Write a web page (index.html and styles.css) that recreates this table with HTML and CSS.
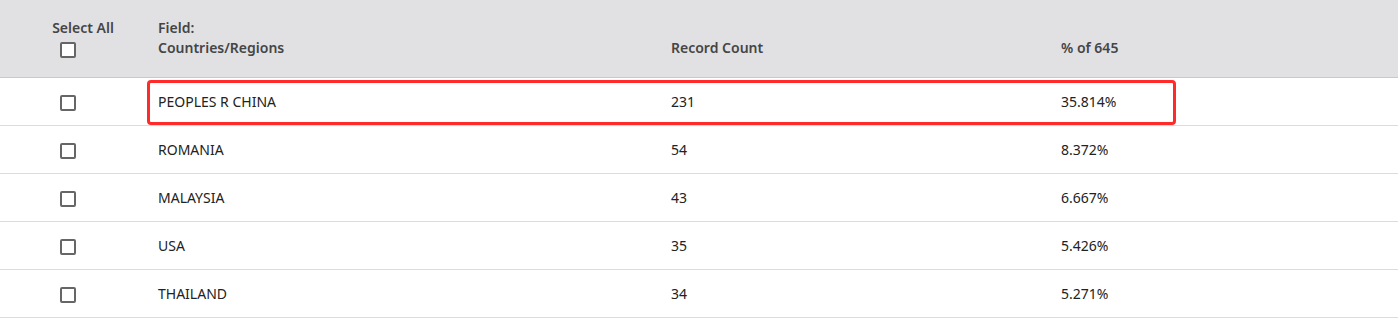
FILE: index.html
```html
<!DOCTYPE html>
<html>
<head>
<meta charset="utf-8">
<link rel="stylesheet" href="styles.css">
</head>
<body>
<div class="table">
  <div class="row head">
    <div class="cell sel">
      <span class="sel-label">Select All</span>
      <span class="box"></span>
    </div>
    <div class="cell">Field:<br>Countries/Regions</div>
    <div class="cell bottom">Record Count</div>
    <div class="cell bottom">% of 645</div>
  </div>
  <div class="row body highlight">
    <div class="cell chk"><span class="box"></span></div>
    <div class="cell">PEOPLES R CHINA</div>
    <div class="cell">231</div>
    <div class="cell">35.814%</div>
    <div class="mark"></div>
  </div>
  <div class="row body">
    <div class="cell chk"><span class="box"></span></div>
    <div class="cell">ROMANIA</div>
    <div class="cell">54</div>
    <div class="cell">8.372%</div>
  </div>
  <div class="row body">
    <div class="cell chk"><span class="box"></span></div>
    <div class="cell">MALAYSIA</div>
    <div class="cell">43</div>
    <div class="cell">6.667%</div>
  </div>
  <div class="row body">
    <div class="cell chk"><span class="box"></span></div>
    <div class="cell">USA</div>
    <div class="cell">35</div>
    <div class="cell">5.426%</div>
  </div>
  <div class="row body">
    <div class="cell chk"><span class="box"></span></div>
    <div class="cell">THAILAND</div>
    <div class="cell">34</div>
    <div class="cell">5.271%</div>
  </div>
</div>
</body>
</html>
```
FILE: styles.css
```css
html, body {
  margin: 0;
  padding: 0;
  background: #ffffff;
}
body {
  font-family: "Noto Sans", "Liberation Sans", sans-serif;
  font-size: 14px;
  color: #222222;
}
.table {
  width: 1398px;
}
.row {
  display: grid;
  grid-template-columns: 136px 513px 390px 359px;
  position: relative;
}
.head {
  background: #e1e1e4;
  border-bottom: 1px solid #c9c9cc;
  height: 77px;
  box-sizing: border-box;
  height: 78px;
  color: #454545;
  font-weight: 600;
}
.head .cell {
  padding: 18px 0 0 22px;
  line-height: 20px;
}
.head .cell.bottom {
  padding-top: 38px;
}
.head .cell.sel {
  padding: 18px 0 0 0;
  display: flex;
  flex-direction: column;
  align-items: center;
}
.sel-label {
  margin-left: 30px;
}
.head .box {
  margin-top: 4px;
}
.body {
  height: 48px;
  box-sizing: border-box;
  border-bottom: 1px solid #dcdcdc;
  align-items: center;
}
.body .cell {
  padding-left: 22px;
  line-height: 20px;
}
.body .cell.chk {
  padding-left: 0;
  display: flex;
  justify-content: center;
  padding-top: 2px;
}
.box {
  display: block;
  width: 16px;
  height: 16px;
  box-sizing: border-box;
  border: 2px solid #666666;
  border-radius: 2px;
  background: #ffffff;
}
.mark {
  position: absolute;
  left: 147px;
  top: 2px;
  width: 1029px;
  height: 45px;
  box-sizing: border-box;
  border: 3px solid #ff2a2a;
  border-radius: 4px;
}
```
